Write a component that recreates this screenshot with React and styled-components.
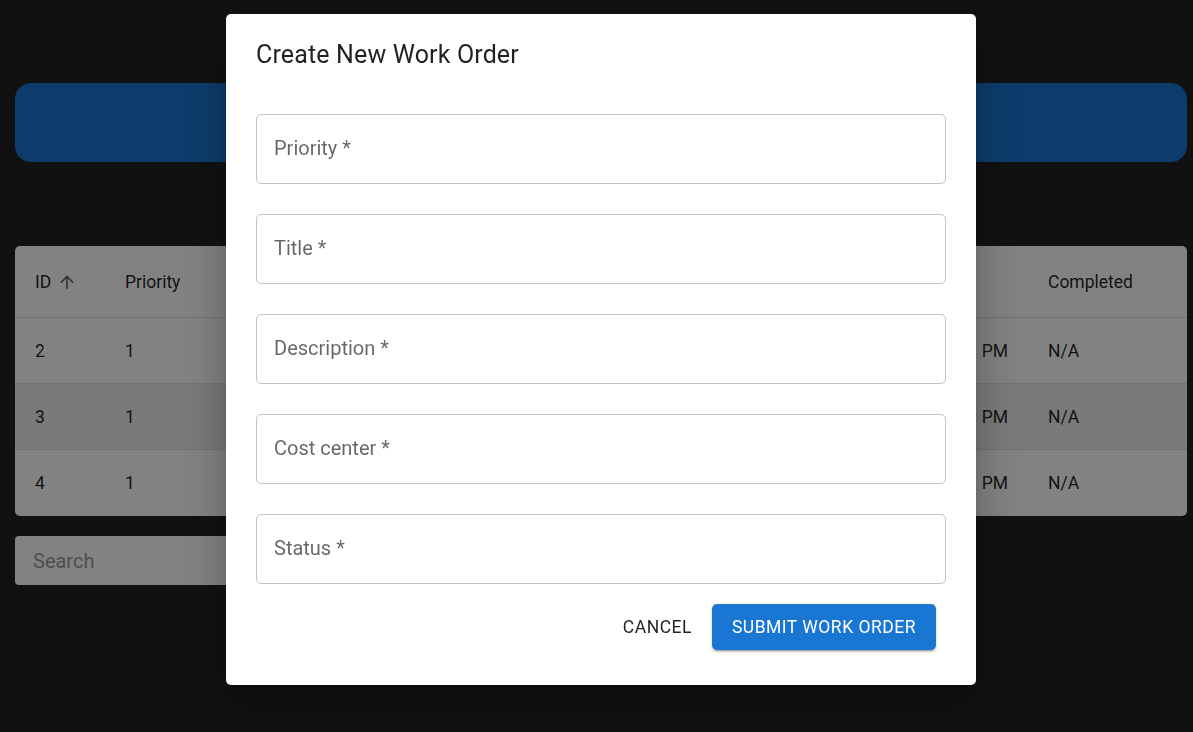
import React from 'react';
import styled, { createGlobalStyle } from 'styled-components';

const GlobalStyle = createGlobalStyle`
  html, body {
    margin: 0;
    padding: 0;
    background: #232323;
    font-family: Roboto, "Liberation Sans", sans-serif;
    overflow: hidden;
  }
  * { box-sizing: border-box; }
`

const Page = styled.div`
  width: 1172px;
  margin-left: 15px;
  padding-top: 83px;
  display: flex;
  flex-direction: column;
`

const Banner = styled.div`
  height: 79px;
  background: #1976d2;
  border-radius: 16px;
  display: flex;
  align-items: center;
  justify-content: center;
  color: #fff;
  font-size: 30px;
  font-weight: 500;
`

const TablePaper = styled.div`
  margin-top: 84px;
  background: #fff;
  border-radius: 5px;
  overflow: hidden;
`

const Row = styled.div`
  display: grid;
  grid-template-columns: 90px 140px 1fr 1fr 1fr 1fr 229px 159px;
  height: ${p => (p.$head ? 72 : 66)}px;
  align-items: center;
  background: ${p => (p.$striped ? '#efefef' : 'transparent')};
  border-bottom: ${p => (p.$last ? 'none' : '1px solid #e0e0e0')};
`

const Cell = styled.div`
  padding: 0 20px;
  font-size: 17.5px;
  color: rgba(0, 0, 0, 0.87);
  white-space: nowrap;
  overflow: hidden;
  display: flex;
  align-items: center;
  justify-content: ${p => (p.$end ? 'flex-end' : 'flex-start')};
  gap: 6px;
`

const SearchInput = styled.input`
  margin-top: 20px;
  width: 420px;
  height: 49px;
  border: none;
  border-radius: 4px;
  background: #fff;
  padding: 0 18px;
  font-family: inherit;
  font-size: 20px;
  outline: none;
  &::placeholder { color: #9a9a9a; }
`

const Backdrop = styled.div`
  position: fixed;
  inset: 0;
  background: rgba(0, 0, 0, 0.49);
  display: flex;
  justify-content: center;
  align-items: flex-start;
  padding: 14px 0 0 9px;
`

const Dialog = styled.div`
  width: 750px;
  background: #fff;
  border-radius: 5px;
  box-shadow: 0px 11px 15px -7px rgba(0,0,0,0.2), 0px 24px 38px 3px rgba(0,0,0,0.14), 0px 9px 46px 8px rgba(0,0,0,0.12);
  display: flex;
  flex-direction: column;
`

const Title = styled.h2`
  margin: 0;
  padding: 21px 30px 19px;
  font-size: 25px;
  font-weight: 400;
  line-height: 40px;
  color: rgba(0, 0, 0, 0.87);
  letter-spacing: 0.15px;
`

const Content = styled.form`
  padding: 0 30px 25px;
  display: flex;
  flex-direction: column;
`

const TextInput = styled.input`
  margin: 20px 0 10px;
  height: 70px;
  width: 100%;
  border: 1px solid #c4c4c4;
  border-radius: 5px;
  padding: 0 17px 2px;
  font-family: inherit;
  font-size: 20px;
  color: rgba(0, 0, 0, 0.87);
  outline: none;
  &::placeholder { color: rgba(0, 0, 0, 0.6); }
`

const Actions = styled.div`
  display: flex;
  justify-content: flex-end;
  gap: 10px;
  padding: 10px;
`

const Button = styled.button`
  height: 46px;
  padding: 0 ${p => (p.$primary ? 20 : 10)}px;
  border: none;
  border-radius: 5px;
  font-family: inherit;
  font-size: 17.5px;
  font-weight: 400;
  letter-spacing: 0.5px;
  text-transform: uppercase;
  cursor: pointer;
  background: ${p => (p.$primary ? '#1976d2' : 'transparent')};
  color: ${p => (p.$primary ? '#fff' : 'rgba(0, 0, 0, 0.87)')};
  box-shadow: ${p => (p.$primary ? '0px 3px 1px -2px rgba(0,0,0,0.2), 0px 2px 2px 0px rgba(0,0,0,0.14), 0px 1px 5px 0px rgba(0,0,0,0.12)' : 'none')};
`

const ArrowUp = () => (
  <svg width="20" height="20" viewBox="0 0 24 24" fill="rgba(0,0,0,0.6)">
    <path d="M4 12l1.41 1.41L11 7.83V20h2V7.83l5.58 5.59L20 12l-8-8-8 8z" />
  </svg>
)

const columns = ['Priority', 'Title', 'Description', 'Cost center', 'Status', 'Created', 'Completed']

const rows = [
  { id: 2, priority: 1, title: 'Fix HVAC', description: 'No cooling', cost: 'CC-100', status: 'Open', created: '10/24/2023, 4:32:15\u2002PM' },
  { id: 3, priority: 1, title: 'Lights', description: 'Lights out', cost: 'CC-200', status: 'Open', created: '10/24/2023, 4:35:02\u2002PM' },
  { id: 4, priority: 1, title: 'Roof', description: 'Roof leak', cost: 'CC-300', status: 'Open', created: '10/24/2023, 4:40:48\u2002PM' },
]

const fields = ['Priority *', 'Title *', 'Description *', 'Cost center *', 'Status *']

export default function App() {
  return (
    <>
      <GlobalStyle />
      <Page>
        <Banner>Work Orders</Banner>
        <TablePaper>
          <Row $head>
            <Cell>ID <ArrowUp /></Cell>
            {columns.map(c => <Cell key={c}>{c}</Cell>)}
          </Row>
          {rows.map((r, i) => (
            <Row key={r.id} $striped={i % 2 === 1} $last={i === rows.length - 1}>
              <Cell>{r.id}</Cell>
              <Cell>{r.priority}</Cell>
              <Cell>{r.title}</Cell>
              <Cell>{r.description}</Cell>
              <Cell>{r.cost}</Cell>
              <Cell>{r.status}</Cell>
              <Cell $end>{r.created}</Cell>
              <Cell>N/A</Cell>
            </Row>
          ))}
        </TablePaper>
        <SearchInput placeholder="Search" />
      </Page>
      <Backdrop>
        <Dialog>
          <Title>Create New Work Order</Title>
          <Content onSubmit={e => e.preventDefault()}>
            {fields.map(f => <TextInput key={f} placeholder={f} />)}
            <Actions>
              <Button type="button">Cancel</Button>
              <Button type="submit" $primary>Submit Work Order</Button>
            </Actions>
          </Content>
        </Dialog>
      </Backdrop>
    </>
  )
}
